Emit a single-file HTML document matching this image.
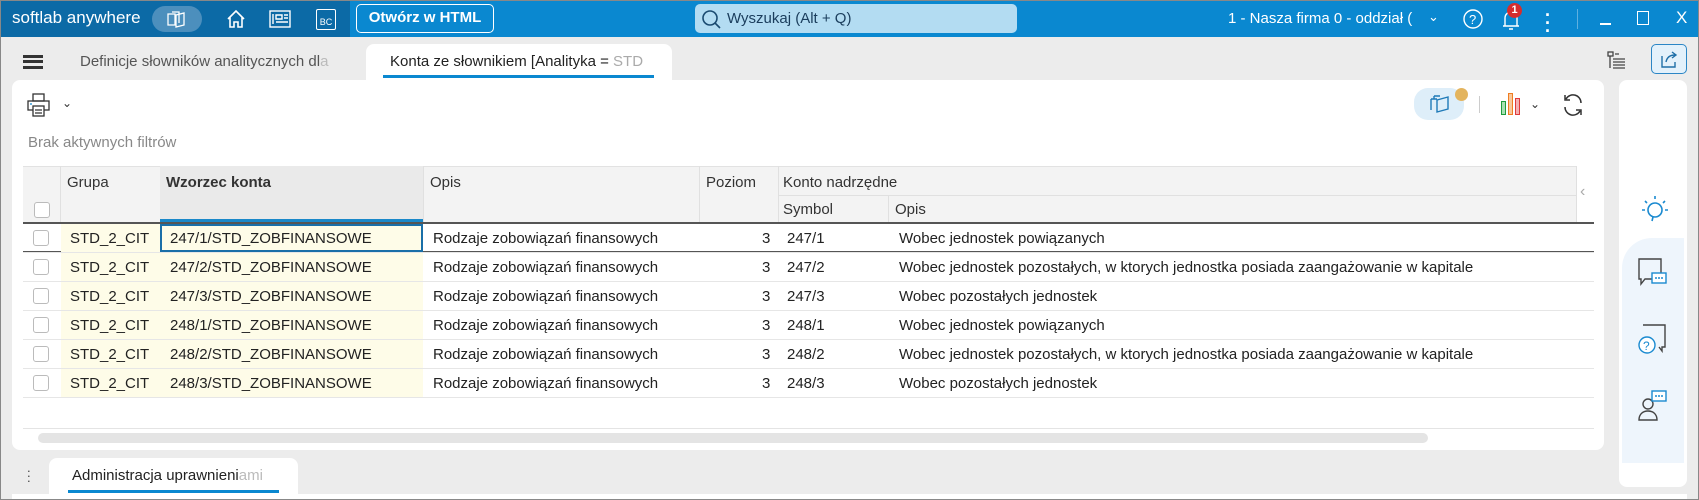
<!DOCTYPE html>
<html><head><meta charset="utf-8"><style>
*{box-sizing:border-box;margin:0;padding:0}
body{width:1699px;height:500px;overflow:hidden;background:#ececec;font-family:"Liberation Sans",Arial,sans-serif;position:relative;color:#222}
.a{position:absolute}
.hdr{left:0;top:0;width:1699px;height:37px;background:#0a88d0}
.hdrl{left:0;top:0;width:350px;height:37px;background:#0c6aa6}
.w{color:#fff}
.tabtxt{font-size:15px;color:#555}
.card{left:12px;top:80px;width:1592px;height:370px;background:#fff;border-radius:8px}
.row{position:absolute;left:23px;width:1571px;height:29px;border-bottom:1px solid #e6e6e6;font-size:15px}
.row div{position:absolute;top:6px}
.cb{position:absolute;left:10px;top:6px!important;width:16px;height:16px;border:1px solid #bbb;border-radius:3px;background:#fff}
.y1{position:absolute;left:38px;top:0!important;width:99px;height:28px;background:#fefce8}
.y2{position:absolute;left:137px;top:0!important;width:263px;height:28px;background:#fefce8}
.th{font-size:15px;color:#333}
</style></head><body>
<div class="a hdr"></div><div class="a hdrl"></div>
<div class="a w" style="left:12px;top:8px;font-size:17px">softlab anywhere</div>
<div class="a" style="left:152px;top:6px;width:50px;height:26px;border-radius:13px;background:#4c8fbd"></div>
<svg class="a" style="left:165px;top:9px" width="24" height="20" fill="none" stroke="#fff" stroke-width="1.3"><path d="M3 5h7v11H3z M7 3h7v11 M11 6l8-2v12l-8 2z"/></svg>
<svg class="a" style="left:225px;top:8px" width="22" height="22" fill="none" stroke="#fff" stroke-width="1.6"><path d="M3 11L11 3l8 8M5 9v10h4v-5h4v5h4V9"/></svg>
<svg class="a" style="left:268px;top:9px" width="24" height="20" fill="none" stroke="#fff" stroke-width="1.4"><rect x="2" y="2" width="20" height="16"/><path d="M5 5v10M8 6h6v4H8zM16 6h4M16 9h4M8 13h12"/></svg>
<div class="a" style="left:316px;top:9px;width:20px;height:21px;border:1.5px solid #fff;border-radius:2px;color:#fff;font-size:9px;padding-top:7px;text-align:center">BC</div>
<div class="a w" style="left:356px;top:4px;width:138px;height:29px;border:1.5px solid #fff;border-radius:5px;font-size:15px;font-weight:bold;text-align:center;line-height:26px">Otwórz w HTML</div>
<div class="a" style="left:695px;top:4px;width:322px;height:29px;background:#b3dcf2;border-radius:5px"></div>
<svg class="a" style="left:700px;top:8px" width="22" height="22" fill="none" stroke="#1a4a70" stroke-width="1.6"><circle cx="10" cy="10" r="7"/><path d="M15 15l5 5"/></svg>
<div class="a" style="left:727px;top:10px;font-size:15px;color:#1a3d5c">Wyszukaj (Alt + Q)</div>
<div class="a w" style="left:1228px;top:10px;font-size:15px">1 - Nasza firma 0 - oddział (</div>
<div class="a w" style="left:1428px;top:9px;font-size:13px">&#8964;</div>
<svg class="a" style="left:1462px;top:8px" width="22" height="22" fill="none" stroke="#fff" stroke-width="1.4"><circle cx="11" cy="11" r="9"/><text x="7" y="16" fill="#fff" stroke="none" font-size="13" font-family="Liberation Sans">?</text></svg>
<svg class="a" style="left:1500px;top:8px" width="22" height="24" fill="none" stroke="#fff" stroke-width="1.4"><path d="M5 18V10a6 6 0 0 1 12 0v8M3 18h16M9 21h4"/></svg>
<div class="a" style="left:1507px;top:3px;width:15px;height:15px;border-radius:50%;background:#d62d2d;color:#fff;font-size:11px;font-weight:bold;text-align:center;line-height:15px">1</div>
<div class="a w" style="left:1545px;top:6px;font-size:18px;font-weight:bold;line-height:8px">.<br>.<br>.</div>
<div class="a" style="left:1577px;top:9px;width:1px;height:20px;background:#5fb0e0"></div>
<div class="a" style="left:1600px;top:23px;width:11px;height:1.5px;background:#fff"></div>
<div class="a" style="left:1637px;top:11px;width:12px;height:14px;border:1.5px solid #fff"></div>
<div class="a w" style="left:1676px;top:8px;font-size:17px">X</div>

<div class="a" style="left:23px;top:55px;width:20px;height:14px;border-top:3px solid #333;border-bottom:3px solid #333"></div>
<div class="a" style="left:23px;top:60px;width:20px;height:3px;background:#333"></div>
<div class="a tabtxt" style="left:80px;top:53px">Definicje słowników analitycznych dl<span style="color:#bbb">a</span></div>
<div class="a" style="left:366px;top:44px;width:306px;height:40px;background:#fff;border-radius:8px 8px 0 0"></div>
<div class="a" style="left:390px;top:53px;font-size:15px;color:#222">Konta ze słownikiem [Analityka = <span style="color:#aaa">STD</span></div>
<div class="a" style="left:383px;top:75px;width:271px;height:3px;background:#0a88d0"></div>
<svg class="a" style="left:1606px;top:50px" width="22" height="22" fill="none" stroke="#444" stroke-width="1.3"><rect x="2" y="2" width="5" height="4"/><path d="M9 4h4M7 9h12M7 12h12M7 15h12M7 18h12M4 6v12"/></svg>
<div class="a" style="left:1651px;top:44px;width:36px;height:30px;border:1.5px solid #2b86c6;border-radius:5px;background:#e3f1fb"></div>
<svg class="a" style="left:1658px;top:48px" width="22" height="22" fill="none" stroke="#1f6fa8" stroke-width="1.4"><path d="M4 8v11h13v-5M8 14c1-5 4-7 9-7M14 4l4 3-4 3"/></svg>

<div class="a card"></div>
<svg class="a" style="left:26px;top:92px" width="26" height="26" fill="none" stroke="#333" stroke-width="1.3"><rect x="7" y="2" width="11" height="7"/><rect x="2" y="9" width="21" height="9"/><rect x="7" y="14" width="11" height="10" fill="#fff"/><path d="M9 18h7M9 21h7"/><path d="M4 12h2" stroke="#1a8ad0"/></svg>
<div class="a" style="left:62px;top:96px;font-size:12px;color:#333">&#8964;</div>
<div class="a" style="left:28px;top:134px;font-size:15px;color:#888">Brak aktywnych filtrów</div>
<div class="a" style="left:1414px;top:88px;width:50px;height:32px;border-radius:14px;background:#deeef9"></div>
<svg class="a" style="left:1428px;top:92px" width="24" height="24" fill="none" stroke="#1f7ab8" stroke-width="1.4"><path d="M3 7h6M3 7v11M6 4h6M6 4v3M9 8l11-3v12l-11 3z"/></svg>
<div class="a" style="left:1455px;top:88px;width:13px;height:13px;border-radius:50%;background:#e3b45e"></div>
<div class="a" style="left:1479px;top:96px;width:1px;height:17px;background:#ccc"></div>
<div class="a" style="left:1501px;top:101px;width:5px;height:14px;border:1.5px solid #1f9c3c;background:#a8e0b3"></div>
<div class="a" style="left:1508px;top:93px;width:5px;height:22px;border:1.5px solid #ef7d22;background:#f8c89c"></div>
<div class="a" style="left:1515px;top:98px;width:5px;height:17px;border:1.5px solid #e03b3b;background:#f4b0b0"></div>
<div class="a" style="left:1530px;top:97px;font-size:12px;color:#333">&#8964;</div>
<svg class="a" style="left:1560px;top:92px" width="26" height="26" fill="none" stroke="#333" stroke-width="1.5"><path d="M21 11a8 8 0 0 0-15-4M5 15a8 8 0 0 0 15 4M5 3v5h5M21 23v-5h-5"/></svg>

<div class="a" style="left:23px;top:166px;width:1554px;height:58px;background:#f3f3f3;border-top:1px solid #e2e2e2"></div>
<div class="a" style="left:160px;top:166px;width:263px;height:56px;background:#eaeaea"></div>
<div class="a" style="left:160px;top:219px;width:263px;height:3px;background:#1a88c9"></div>
<div class="a" style="left:60px;top:166px;width:1px;height:56px;background:#e0e0e0"></div>
<div class="a" style="left:423px;top:166px;width:1px;height:56px;background:#e0e0e0"></div>
<div class="a" style="left:699px;top:166px;width:1px;height:56px;background:#e0e0e0"></div>
<div class="a" style="left:778px;top:166px;width:1px;height:56px;background:#e0e0e0"></div>
<div class="a" style="left:778px;top:195px;width:799px;height:1px;background:#e0e0e0"></div>
<div class="a" style="left:888px;top:195px;width:1px;height:27px;background:#e0e0e0"></div>
<div class="a" style="left:1576px;top:166px;width:1px;height:56px;background:#e0e0e0"></div>
<div class="a" style="left:34px;top:202px;width:16px;height:16px;border:1px solid #bbb;border-radius:3px;background:#fff"></div>
<div class="a th" style="left:67px;top:174px">Grupa</div>
<div class="a th" style="left:166px;top:174px;font-weight:bold">Wzorzec konta</div>
<div class="a th" style="left:430px;top:174px">Opis</div>
<div class="a th" style="left:706px;top:174px">Poziom</div>
<div class="a th" style="left:783px;top:174px">Konto nadrzędne</div>
<div class="a th" style="left:783px;top:201px">Symbol</div>
<div class="a th" style="left:895px;top:201px">Opis</div>
<div class="a" style="left:1580px;top:183px;color:#aaa;font-size:16px">&lsaquo;</div>
<div class="a" style="left:23px;top:222px;width:1571px;height:2px;background:#555"></div>
<div class="a" style="left:23px;top:251px;width:1571px;height:2px;background:#555"></div>

<div class="row" style="top:224px"><span class="y1"></span><span class="y2" style="border:2px solid #1a6fa8;background:#fefce8"></span><span class="cb"></span><div style="left:47px">STD_2_CIT</div><div style="left:147px">247/1/STD_ZOBFINANSOWE</div><div style="left:410px">Rodzaje zobowiązań finansowych</div><div style="left:739px">3</div><div style="left:764px">247/1</div><div style="left:876px">Wobec jednostek powiązanych</div></div>
<div class="row" style="top:253px"><span class="y1"></span><span class="y2"></span><span class="cb"></span><div style="left:47px">STD_2_CIT</div><div style="left:147px">247/2/STD_ZOBFINANSOWE</div><div style="left:410px">Rodzaje zobowiązań finansowych</div><div style="left:739px">3</div><div style="left:764px">247/2</div><div style="left:876px">Wobec jednostek pozostałych, w ktorych jednostka posiada zaangażowanie w kapitale</div></div>
<div class="row" style="top:282px"><span class="y1"></span><span class="y2"></span><span class="cb"></span><div style="left:47px">STD_2_CIT</div><div style="left:147px">247/3/STD_ZOBFINANSOWE</div><div style="left:410px">Rodzaje zobowiązań finansowych</div><div style="left:739px">3</div><div style="left:764px">247/3</div><div style="left:876px">Wobec pozostałych jednostek</div></div>
<div class="row" style="top:311px"><span class="y1"></span><span class="y2"></span><span class="cb"></span><div style="left:47px">STD_2_CIT</div><div style="left:147px">248/1/STD_ZOBFINANSOWE</div><div style="left:410px">Rodzaje zobowiązań finansowych</div><div style="left:739px">3</div><div style="left:764px">248/1</div><div style="left:876px">Wobec jednostek powiązanych</div></div>
<div class="row" style="top:340px"><span class="y1"></span><span class="y2"></span><span class="cb"></span><div style="left:47px">STD_2_CIT</div><div style="left:147px">248/2/STD_ZOBFINANSOWE</div><div style="left:410px">Rodzaje zobowiązań finansowych</div><div style="left:739px">3</div><div style="left:764px">248/2</div><div style="left:876px">Wobec jednostek pozostałych, w ktorych jednostka posiada zaangażowanie w kapitale</div></div>
<div class="row" style="top:369px"><span class="y1"></span><span class="y2"></span><span class="cb"></span><div style="left:47px">STD_2_CIT</div><div style="left:147px">248/3/STD_ZOBFINANSOWE</div><div style="left:410px">Rodzaje zobowiązań finansowych</div><div style="left:739px">3</div><div style="left:764px">248/3</div><div style="left:876px">Wobec pozostałych jednostek</div></div>
<div class="a" style="left:23px;top:428px;width:1571px;height:1px;background:#e4e4e4"></div>
<div class="a" style="left:38px;top:433px;width:1390px;height:10px;border-radius:5px;background:#e4e4e4"></div>

<div class="a" style="left:1619px;top:80px;width:68px;height:407px;background:#fff;border-radius:8px"></div>
<div class="a" style="left:1622px;top:238px;width:62px;height:225px;background:#eef5fc;border-radius:30px 0 0 0"></div>
<svg class="a" style="left:1640px;top:193px" width="30" height="30" fill="none" stroke="#1a8ad0" stroke-width="1.6"><circle cx="15" cy="17" r="7"/><path d="M15 3v3M5 8l2 2M25 8l-2 2M2 17h3M25 17h3M13 24l-1 4"/></svg>
<svg class="a" style="left:1636px;top:256px" width="34" height="34" fill="none" stroke-width="1.4"><path d="M3 3h22v20H9l-4 5v-5H3z" stroke="#444"/><rect x="16" y="17" width="14" height="10" fill="#fff" stroke="#1a8ad0"/><path d="M19 22h8" stroke="#1a8ad0" stroke-dasharray="2 1"/></svg>
<svg class="a" style="left:1636px;top:322px" width="34" height="34" fill="none" stroke-width="1.4"><path d="M7 3h22v22h-3v4l-3-4" stroke="#444"/><circle cx="11" cy="23" r="8" fill="#fff" stroke="#1a8ad0"/><text x="7" y="28" font-size="12" fill="#1a8ad0" font-family="Liberation Sans">?</text></svg>
<svg class="a" style="left:1636px;top:388px" width="34" height="34" fill="none" stroke-width="1.4"><circle cx="12" cy="16" r="5" stroke="#444"/><path d="M3 32c0-6 4-9 9-9s9 3 9 9z" stroke="#444"/><rect x="16" y="3" width="14" height="10" fill="#fff" stroke="#1a8ad0"/><path d="M19 8h8" stroke="#1a8ad0" stroke-dasharray="2 1"/></svg>

<div class="a" style="left:27px;top:465px;font-size:13px;color:#444;line-height:5px">.<br>.<br>.</div>
<div class="a" style="left:49px;top:458px;width:249px;height:40px;background:#fff;border-radius:8px 8px 0 0"></div>
<div class="a" style="left:72px;top:467px;font-size:15px;color:#222">Administracja uprawnieni<span style="color:#bbb">ami</span></div>
<div class="a" style="left:68px;top:490px;width:211px;height:3px;background:#0a88d0"></div>
<div class="a" style="left:12px;top:494px;width:1675px;height:6px;background:#fff"></div>
<div class="a" style="left:0;top:0;width:1699px;height:500px;border:1px solid #888;pointer-events:none"></div>
</body></html>
